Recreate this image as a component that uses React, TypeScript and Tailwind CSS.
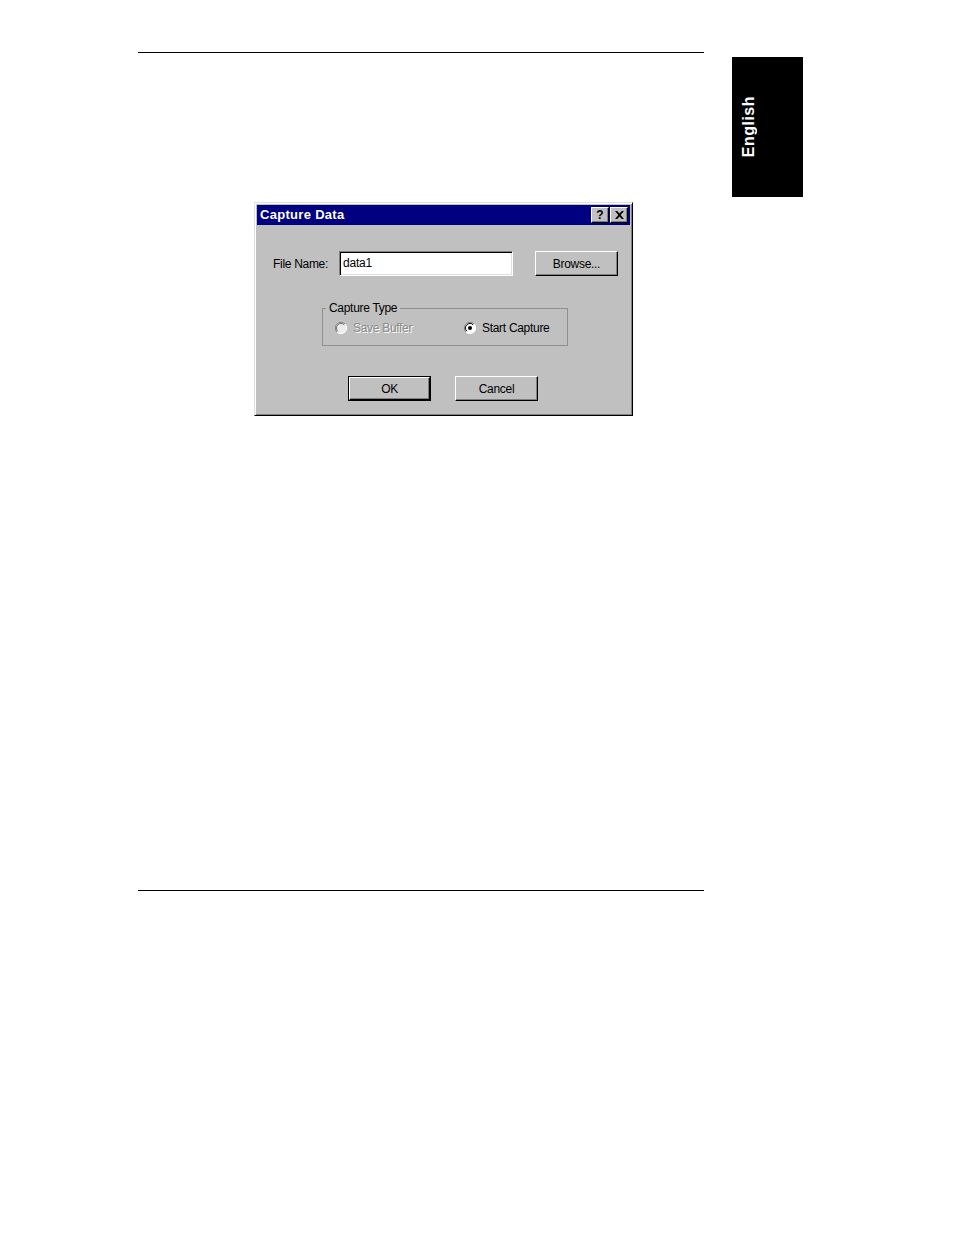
import React from "react";

const font = { fontFamily: '"Liberation Sans", Arial, sans-serif' };

function RaisedButton({ label, isDefault }: { label: string; isDefault?: boolean }) {
  return (
    <div
      className={
        isDefault
          ? "w-[83px] h-[25px] border border-black bg-[#c0c0c0]"
          : "w-[83px] h-[25px] bg-[#c0c0c0]"
      }
    >
      <div className="w-full h-full flex items-center justify-center border border-t-white border-l-white border-r-black border-b-black shadow-[inset_-1px_-1px_#808080] text-[12px] tracking-[-0.3px] text-black">
        {label}
      </div>
    </div>
  );
}

function Radio({ checked, disabled, label }: { checked?: boolean; disabled?: boolean; label: string }) {
  return (
    <div className="flex items-center gap-[6px] whitespace-nowrap">
      <svg width="12" height="12" viewBox="0 0 12 12">
        <circle cx="6" cy="6" r="5.5" fill={disabled ? "#ececec" : "#ffffff"} />
        <path d="M10 2 A5.5 5.5 0 0 0 2 10" stroke="#808080" strokeWidth="1" fill="none" />
        <path d="M9.2 2.8 A4.5 4.5 0 0 0 2.8 9.2" stroke={disabled ? "#707070" : "#000"} strokeWidth="1" fill="none" />
        <path d="M2 10 A5.5 5.5 0 0 0 10 2" stroke="#ffffff" strokeWidth="1" fill="none" />
        {checked && <circle cx="6" cy="6" r="2" fill="#000" />}
      </svg>
      <span
        className={
          disabled
            ? "text-[12px] leading-[14px] tracking-[-0.3px] text-[#8a8a8a] [text-shadow:1px_1px_#fff]"
            : "text-[12px] leading-[14px] tracking-[-0.3px] text-black"
        }
      >
        {label}
      </span>
    </div>
  );
}

function CaptureDialog() {
  return (
    <div
      className="w-[379px] h-[214px] bg-[#c0c0c0] border border-t-[#dfdfdf] border-l-[#dfdfdf] border-r-black border-b-black shadow-[inset_1px_1px_#fff,inset_-1px_-1px_#808080] p-[2px] flex flex-col"
      style={font}
    >
      {/* title bar */}
      <div className="h-[20px] bg-[#000080] flex items-center justify-between pl-[3px] pr-[2px]">
        <span className="text-white font-bold text-[13px] tracking-[0.3px]">Capture Data</span>
        <div className="flex gap-[1px]">
          <div className="w-[18px] h-[16px] bg-[#c0c0c0] border border-t-white border-l-white border-r-black border-b-black shadow-[inset_-1px_-1px_#808080] flex items-center justify-center text-[12px] font-bold leading-none text-black">
            ?
          </div>
          <div className="w-[18px] h-[16px] bg-[#c0c0c0] border border-t-white border-l-white border-r-black border-b-black shadow-[inset_-1px_-1px_#808080] flex items-center justify-center">
            <svg width="9" height="8" viewBox="0 0 9 8">
              <path d="M0 0h2.2l2.3 2.6L6.8 0H9L5.6 4 9 8H6.8L4.5 5.4 2.2 8H0l3.4-4z" fill="#000" />
            </svg>
          </div>
        </div>
      </div>

      {/* file name row */}
      <div className="mt-[26px] flex items-center pl-[16px]">
        <span className="w-[66px] text-[12px] tracking-[-0.3px] text-black">File Name:</span>
        <div className="w-[174px] h-[25px] bg-white border border-t-[#808080] border-l-[#808080] border-r-white border-b-white shadow-[inset_1px_1px_#000,inset_-1px_-1px_#dfdfdf] pl-[3px] pt-[2px] text-[12px] tracking-[-0.2px] text-black">
          data1
        </div>
        <div className="ml-[22px]">
          <RaisedButton label="Browse..." />
        </div>
      </div>

      {/* capture type group */}
      <fieldset className="ml-[65px] mt-[25px] w-[246px] border border-[#8f8f8f] px-[12px] pb-[10px]">
        <legend className="ml-[-9px] px-[3px] text-[12px] leading-[14px] tracking-[-0.3px] text-black">
          Capture Type
        </legend>
        <div className="flex items-center mt-[6px]">
          <div className="w-[129px]">
            <Radio disabled label="Save Buffer" />
          </div>
          <Radio checked label="Start Capture" />
        </div>
      </fieldset>

      {/* actions */}
      <div className="mt-[30px] flex pl-[91px] gap-[24px]">
        <RaisedButton label="OK" isDefault />
        <RaisedButton label="Cancel" />
      </div>
    </div>
  );
}

export default function App() {
  return (
    <div className="w-[954px] h-[1235px] bg-white flex">
      <div className="ml-[138px] w-[566px] pt-[52px] flex flex-col">
        <div className="h-px bg-black" />
        <div className="ml-[116px] mt-[149px]">
          <CaptureDialog />
        </div>
        <div className="mt-[474px] h-px bg-black" />
      </div>

      <div className="ml-[28px] mt-[57px] w-[71px] h-[140px] bg-black flex items-center pl-[9px]">
        <span
          className="[writing-mode:vertical-rl] rotate-180 text-white font-bold text-[16px] leading-none tracking-[0.5px]"
          style={font}
        >
          English
        </span>
      </div>
    </div>
  );
}
